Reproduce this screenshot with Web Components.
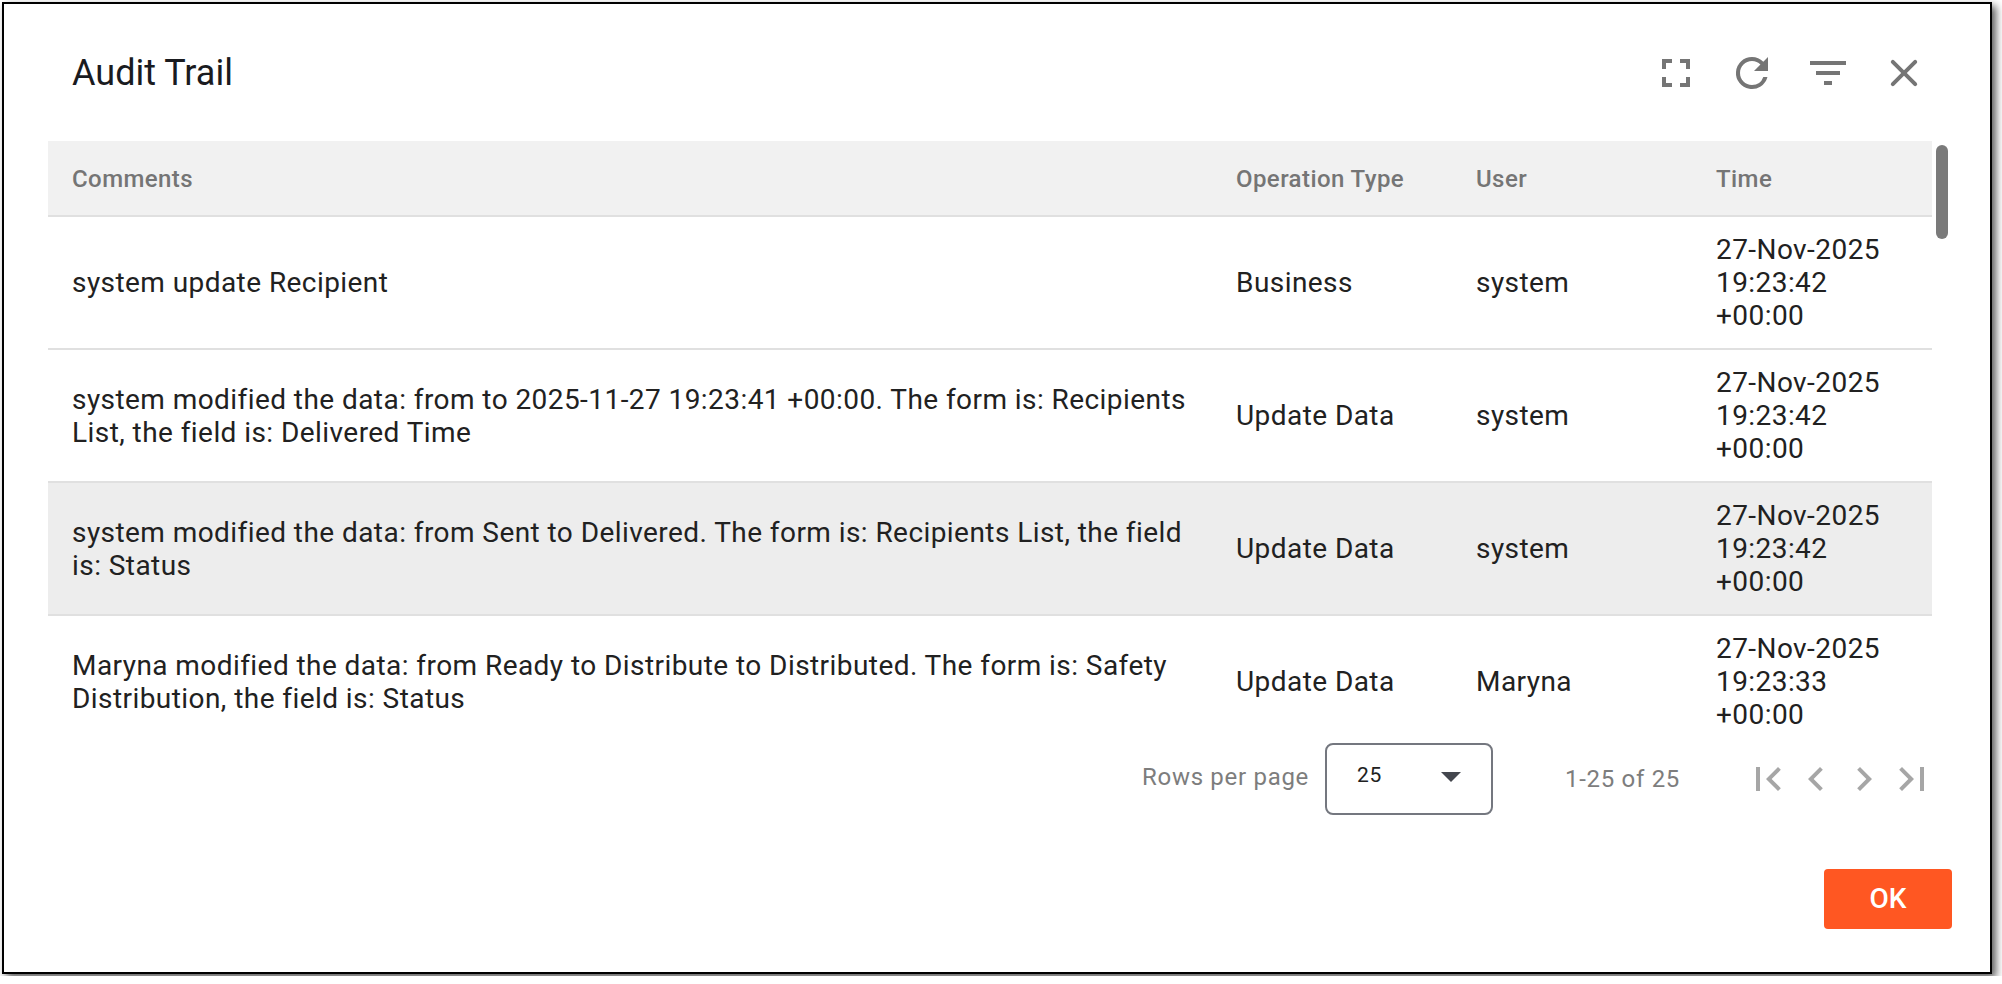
<!DOCTYPE html>
<html lang="en">
<head>
<meta charset="UTF-8">
<title>Audit Trail</title>
<style>
    :root {
        --colour-text: #212121;
        --colour-muted: #757575;
        --colour-line: #e0e0e0;
        --colour-primary: #ff5722;
    }
    body {
        margin: 0;
        padding: 2px;
        background: #fff;
        color: var(--colour-text);
        font-family: Roboto, "Liberation Sans", sans-serif;
        overflow: hidden;
    }
</style>
</head>
<body>
<audit-dialog>
    <span slot="title">Audit Trail</span>
    <audit-icon slot="tools" name="fullscreen"></audit-icon>
    <audit-icon slot="tools" name="refresh"></audit-icon>
    <audit-icon slot="tools" name="filter"></audit-icon>
    <audit-icon slot="tools" name="close"></audit-icon>

    <audit-table>
        <audit-row header>
            <span slot="comments">Comments</span>
            <span slot="type">Operation Type</span>
            <span slot="user">User</span>
            <span slot="time">Time</span>
        </audit-row>
        <audit-row>
            <span slot="comments">system update Recipient</span>
            <span slot="type">Business</span>
            <span slot="user">system</span>
            <span slot="time">27-Nov-2025 19:23:42 +00:00</span>
        </audit-row>
        <audit-row>
            <span slot="comments">system modified the data: from to 2025-11-27 19:23:41 +00:00. The form is: Recipients List, the field is: Delivered Time</span>
            <span slot="type">Update Data</span>
            <span slot="user">system</span>
            <span slot="time">27-Nov-2025 19:23:42 +00:00</span>
        </audit-row>
        <audit-row active>
            <span slot="comments">system modified the data: from Sent to Delivered. The form is: Recipients List, the field is: Status</span>
            <span slot="type">Update Data</span>
            <span slot="user">system</span>
            <span slot="time">27-Nov-2025 19:23:42 +00:00</span>
        </audit-row>
        <audit-row>
            <span slot="comments">Maryna modified the data: from Ready to Distribute to Distributed. The form is: Safety Distribution, the field is: Status</span>
            <span slot="type">Update Data</span>
            <span slot="user">Maryna</span>
            <span slot="time">27-Nov-2025 19:23:33 +00:00</span>
        </audit-row>
    </audit-table>

    <audit-pager size="25" range="1-25 of 25"></audit-pager>
    <audit-button slot="actions">OK</audit-button>
</audit-dialog>

<script>
const ICONS = {
    fullscreen: 'M7 14H5v5h5v-2H7v-3zm-2-4h2V7h3V5H5v5zm12 7h-3v2h5v-5h-2v3zM14 5v2h3v3h2V5h-5z',
    refresh: 'M17.65 6.35A7.958 7.958 0 0 0 12 4a8 8 0 1 0 7.73 10h-2.08A5.99 5.99 0 0 1 12 18c-3.31 0-6-2.69-6-6s2.69-6 6-6c1.66 0 3.14.69 4.22 1.78L13 11h7V4l-2.35 2.35z',
    filter: 'M10 18h4v-2h-4v2zM3 6v2h18V6H3zm3 7h12v-2H6v2z',
    close: 'M18.3 5.71a.996.996 0 0 0-1.41 0L12 10.59 7.11 5.7A.996.996 0 1 0 5.7 7.11L10.59 12 5.7 16.89a.996.996 0 1 0 1.41 1.41L12 13.41l4.89 4.89a.996.996 0 1 0 1.41-1.41L13.41 12l4.89-4.89c.38-.38.38-1.02 0-1.4z',
    first: 'M18.41 16.59L13.82 12l4.59-4.59L17 6l-6 6 6 6zM6 6h2v12H6z',
    prev: 'M15.41 7.41L14 6l-6 6 6 6 1.41-1.41L10.83 12z',
    next: 'M10 6L8.59 7.41 13.17 12l-4.58 4.59L10 18l6-6z',
    last: 'M5.59 7.41L10.18 12l-4.59 4.59L7 18l6-6-6-6zM16 6h2v12h-2z'
};

class AuditIcon extends HTMLElement {
    constructor() {
        super();
        this.attachShadow({mode: 'open'});
        this.shadowRoot.innerHTML = `
            <style>
                :host {
                    display: block;
                    width: 48px;
                    height: 48px;
                }
                svg {
                    display: block;
                    fill: currentColor;
                }
            </style>
            <svg width="48" height="48" viewBox="0 0 24 24"><path d="${ICONS[this.getAttribute('name')]}"/></svg>
        `;
    }
}

class AuditDialog extends HTMLElement {
    constructor() {
        super();
        this.attachShadow({mode: 'open'});
        this.shadowRoot.innerHTML = `
            <style>
                :host {
                    display: flex;
                    flex-direction: column;
                    box-sizing: border-box;
                    width: 1990px;
                    height: 972px;
                    padding: 0 38px 0 44px;
                    border: 2px solid #000;
                    background: #fff;
                    box-shadow: 4px 4px 8px rgba(0, 0, 0, 0.65);
                }
                header {
                    display: flex;
                    align-items: center;
                    justify-content: space-between;
                    height: 137px;
                    box-sizing: border-box;
                    padding: 0 24px 0 24px;
                }
                h1 {
                    margin: 0;
                    padding-top: 1px;
                    font-size: 36px;
                    font-weight: 400;
                    line-height: 48px;
                    color: #1a1b1f;
                }
                .tools {
                    display: flex;
                    gap: 28px;
                    padding-top: 1px;
                    color: var(--colour-muted);
                }
                footer {
                    display: flex;
                    justify-content: flex-end;
                    padding-top: 54px;
                }
            </style>
            <header>
                <h1><slot name="title"></slot></h1>
                <div class="tools"><slot name="tools"></slot></div>
            </header>
            <slot></slot>
            <footer><slot name="actions"></slot></footer>
        `;
    }
}

class AuditTable extends HTMLElement {
    constructor() {
        super();
        this.attachShadow({mode: 'open'});
        this.shadowRoot.innerHTML = `
            <style>
                :host {
                    display: flex;
                    gap: 4px;
                    height: 602px;
                    overflow: hidden;
                }
                .rows {
                    width: 1884px;
                }
                .thumb {
                    width: 12px;
                    height: 94px;
                    margin-top: 4px;
                    border-radius: 6px;
                    background: #7a7a7a;
                }
            </style>
            <div class="rows"><slot></slot></div>
            <div class="thumb"></div>
        `;
    }
}

class AuditRow extends HTMLElement {
    constructor() {
        super();
        this.attachShadow({mode: 'open'});
        this.shadowRoot.innerHTML = `
            <style>
                :host {
                    display: grid;
                    grid-template-columns: 1fr 240px 240px 240px;
                    align-items: center;
                    box-sizing: border-box;
                    height: 133px;
                    border-bottom: 2px solid var(--colour-line);
                    font-size: 28px;
                    line-height: 33px;
                    letter-spacing: 0.435px;
                }
                :host([header]) {
                    height: 76px;
                    padding-top: 2px;
                    background: #f1f1f1;
                    color: var(--colour-muted);
                    font-size: 24px;
                    font-weight: 500;
                    letter-spacing: 0.42px;
                }
                :host([active]) {
                    background: #ededed;
                }
                div {
                    padding: 0 24px;
                }
            </style>
            <div><slot name="comments"></slot></div>
            <div><slot name="type"></slot></div>
            <div><slot name="user"></slot></div>
            <div><slot name="time"></slot></div>
        `;
    }
}

class AuditPager extends HTMLElement {
    constructor() {
        super();
        this.attachShadow({mode: 'open'});
        this.shadowRoot.innerHTML = `
            <style>
                :host {
                    display: flex;
                    align-items: center;
                    justify-content: flex-end;
                    height: 72px;
                    padding-right: 16px;
                    color: #7d7d7d;
                    font-size: 24px;
                    line-height: 28px;
                    letter-spacing: 0.7px;
                }
                .label {
                    padding-bottom: 4px;
                    margin-right: 16px;
                }
                .select {
                    display: flex;
                    align-items: center;
                    justify-content: space-between;
                    box-sizing: border-box;
                    width: 168px;
                    height: 72px;
                    padding: 0 30px 8px 30px;
                    border: 2px solid #74777f;
                    border-radius: 8px;
                    color: var(--colour-text);
                    font-size: 21px;
                }
                .select svg {
                    margin-top: 3px;
                    fill: #44474e;
                }
                .range {
                    width: 112px;
                    margin: 0 67px 0 72px;
                    white-space: nowrap;
                }
                nav {
                    display: flex;
                    color: #a6a6a6;
                }
            </style>
            <span class="label">Rows per page</span>
            <div class="select">
                <span>${this.getAttribute('size')}</span>
                <svg width="20" height="10" viewBox="0 0 20 10"><path d="M0 0h20L10 10z"/></svg>
            </div>
            <span class="range">${this.getAttribute('range')}</span>
            <nav>
                <audit-icon name="first"></audit-icon>
                <audit-icon name="prev"></audit-icon>
                <audit-icon name="next"></audit-icon>
                <audit-icon name="last"></audit-icon>
            </nav>
        `;
    }
}

class AuditButton extends HTMLElement {
    constructor() {
        super();
        this.attachShadow({mode: 'open'});
        this.shadowRoot.innerHTML = `
            <style>
                :host {
                    display: block;
                }
                button {
                    width: 128px;
                    height: 60px;
                    padding: 0 0 1px;
                    border: 0;
                    border-radius: 4px;
                    background: var(--colour-primary);
                    color: #fff;
                    font-family: inherit;
                    font-size: 28px;
                    font-weight: 500;
                    cursor: pointer;
                }
            </style>
            <button><slot></slot></button>
        `;
    }
}

customElements.define('audit-icon', AuditIcon);
customElements.define('audit-dialog', AuditDialog);
customElements.define('audit-table', AuditTable);
customElements.define('audit-row', AuditRow);
customElements.define('audit-pager', AuditPager);
customElements.define('audit-button', AuditButton);
</script>
</body>
</html>
